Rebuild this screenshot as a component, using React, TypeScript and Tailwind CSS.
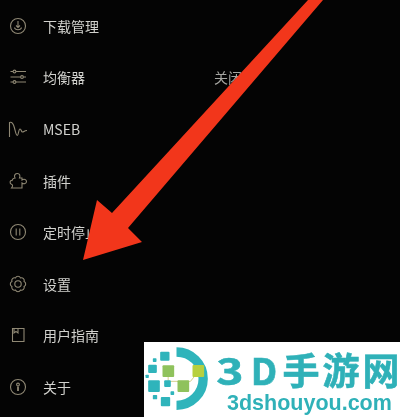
import React from "react";

const cn = "text-[#d2d2ce]";

function Ico({ children }: { children: React.ReactNode }) {
  return (
    <svg viewBox="0 0 18 18" className="w-[18px] h-[18px] shrink-0 text-[#8f8874] overflow-visible" fill="none" stroke="currentColor" strokeWidth="1.1">
      {children}
    </svg>
  );
}

const rows: { icon: React.ReactNode; label: string; value?: string }[] = [
  {
    label: "下载管理",
    icon: (
      <Ico>
        <circle cx="9" cy="9" r="7.500" />
        <path d="M9 4v6.500M7 8.500 9 10.500 11 8.500M5.500 10.500c.5 3 6.500 3 7 0" />
      </Ico>
    ),
  },
  {
    label: "均衡器",
    value: "关闭",
    icon: (
      <Ico>
        <path d="M1.500 3.500h2.500M7 3.500h10M1.500 9h10M14.500 9h2.500M1.500 14h2.500M7 14h10" />
        <circle cx="5.500" cy="3.500" r="1.400" />
        <circle cx="13" cy="9" r="1.400" />
        <circle cx="5.500" cy="14" r="1.400" />
      </Ico>
    ),
  },
  {
    label: "MSEB",
    icon: (
      <Ico>
        <path d="M.5 17V2.500C3 1.500 4.500 4 5.500 8S7 15.500 8.300 15.500 9.500 9 11 9 12 12 13.500 12 15 10.500 18 10.500" />
      </Ico>
    ),
  },
  {
    label: "插件",
    icon: (
      <Ico>
        <path d="M6 6C4.500 3 6.500 1.500 8.500 1.500S11.500 3.500 10.500 6H13V8C15 6.500 17.500 7.500 17.500 9.500S15 12.500 13 11V16H2.500C4 14 4 12.500 2 12 .5 11 1 8 3 8.500 3.500 7 4.500 6 6 6Z" />
      </Ico>
    ),
  },
  {
    label: "定时停止",
    icon: (
      <Ico>
        <circle cx="9" cy="9" r="7.500" />
        <path d="M7.200 5.500v7M10.800 5.500v7" />
      </Ico>
    ),
  },
  {
    label: "设置",
    icon: (
      <Ico>
        <path d="M15.100 6.470A2.800 2.800 0 0 1 15.100 11.530 2.800 2.800 0 0 1 11.530 15.100 2.800 2.800 0 0 1 6.470 15.100 2.800 2.800 0 0 1 2.900 11.530 2.800 2.800 0 0 1 2.900 6.470 2.800 2.800 0 0 1 6.470 2.900 2.800 2.800 0 0 1 11.530 2.900 2.800 2.800 0 0 1 15.100 6.470Z" />
        <circle cx="9" cy="9" r="3.200" />
      </Ico>
    ),
  },
  {
    label: "用户指南",
    icon: (
      <Ico>
        <path d="M3.500 2.500h11.500v13H3.500zM5 2.500v4.500l2-1.500 2 1.500V2.500" />
      </Ico>
    ),
  },
  {
    label: "关于",
    icon: (
      <Ico>
        <circle cx="9" cy="9" r="7.500" />
        <circle cx="9" cy="6.500" r="1.400" />
        <path d="M9 8.500V13" strokeWidth="1.800" />
      </Ico>
    ),
  },
];

function LogoMark() {
  const teal = "#2fb4bb";
  const green = "#8fc25c";
  return (
    <svg viewBox="0 0 200 225" className="w-[67px] h-[75px] shrink-0">
      <path d="M97 30a80 80 0 0 1 0 160" fill="none" stroke={teal} strokeWidth="28" />
      <path d="M72 88v30h45M117 118h22l24-30" fill="none" stroke="#d7d08c" strokeWidth="3" />
      <rect x="48" y="29" width="28" height="27" rx="3" fill={teal} />
      <rect x="26" y="49" width="11" height="11" rx="2" fill={teal} />
      <rect x="12" y="68" width="26" height="25" rx="3" fill={teal} />
      <rect x="4" y="98" width="10" height="10" rx="2" fill={teal} />
      <rect x="55" y="70" width="35" height="35" rx="3" fill={green} />
      <rect x="12" y="115" width="35" height="35" rx="3" fill={teal} />
      <rect x="60" y="115" width="20" height="20" rx="3" fill={teal} />
      <rect x="100" y="115" width="35" height="35" rx="3" fill={green} />
      <rect x="145" y="69" width="35" height="36" rx="3" fill="#b7d03f" />
      <rect x="79" y="148" width="11" height="11" rx="2" fill={teal} />
      <rect x="26" y="159" width="13" height="13" rx="2" fill={teal} />
      <rect x="50" y="165" width="28" height="28" rx="3" fill={teal} />
    </svg>
  );
}

export default function App() {
  return (
    <div className="relative w-[400px] h-[417px] overflow-hidden bg-[#040404] blur-[0.4px] font-['Noto_Sans_CJK_SC','Noto_Sans',sans-serif]">
      {rows.map((r) => (
        <div key={r.label} className="flex items-center h-[51.6px] pl-[9px] text-sm">
          {r.icon}
          <span className={`ml-[16px] w-[171px] ${cn}`}>{r.label}</span>
          {r.value && <span className="text-[#a5a5a1]">{r.value}</span>}
        </div>
      ))}

      <svg viewBox="0 0 400 417" className="absolute inset-0 w-[400px] h-[417px]">
        <polygon points="308,0 323,0 128,228 142,242 83,260 97,200 112,213" fill="#f2361b" />
      </svg>

      <div className="absolute left-[144px] top-[342px] w-[256px] h-[75px] bg-white flex">
        <LogoMark />
        <div className="flex flex-col items-start ml-[2px]">
          <div className="flex items-center h-[46px] mt-[4px] text-[37px] leading-none font-bold text-[#2fb1b8] [-webkit-text-stroke:0.6px_#2fb1b8]">
            <span className="w-[34px] text-center scale-x-125">3</span>
            <span className="w-[34px] text-center">D</span>
            <span className="w-[40px] text-center">手</span>
            <span className="w-[40px] text-center">游</span>
            <span className="w-[40px] text-center">网</span>
          </div>
          <span className="ml-[14px] font-['Liberation_Sans',sans-serif] font-bold text-[21.500px] leading-[22px] text-[#2fb1b8]">
            3dshouyou.com
          </span>
        </div>
      </div>
    </div>
  );
}
